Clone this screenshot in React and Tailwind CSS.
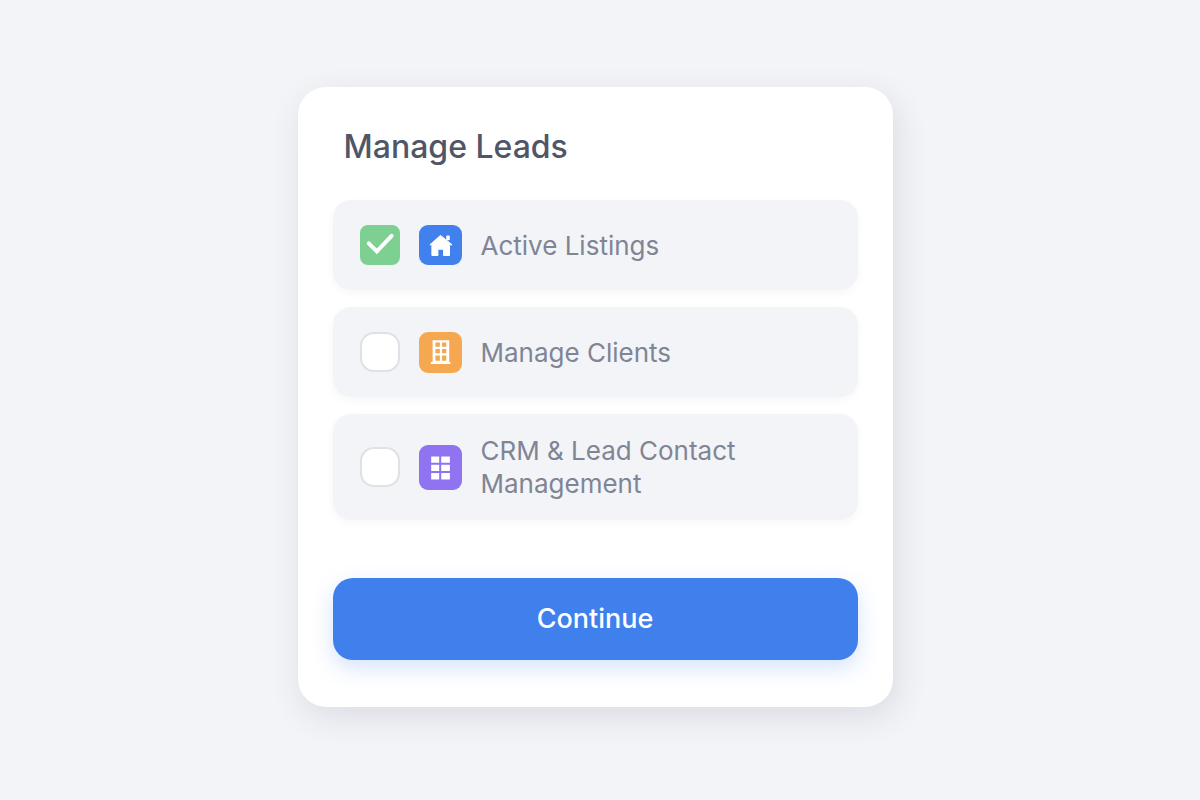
import { useState } from 'react';

const HouseIcon = () => (
  <svg width="43" height="40" viewBox="0 0 43 40" fill="#fff" aria-hidden="true">
    <rect x="27.2" y="10.6" width="3.6" height="4.6" rx="1" />
    <path
      d="M21.5 10.4 10.9 19.8h2v10.7h6v-6.3h5.6v6.3h6V19.8h2.6z"
      stroke="#fff"
      strokeWidth="1"
      strokeLinejoin="round"
    />
  </svg>
);

const BuildingIcon = () => (
  <svg width="43" height="41" viewBox="0 0 43 41" fill="#fff" aria-hidden="true">
    <path
      fillRule="evenodd"
      d="M13.6 8.2h16.6v21.8h1.2v2H11.8v-2h1.8zM16.4 10.6v4.2h4.5v-4.2zM23 10.6v4.2h4.3v-4.2zM16.4 16.9v4.3h4.5v-4.3zM23 16.9v4.3h4.3v-4.3zM16.4 23.4v5.4h4.5v-5.4zM23 23.4v5.4h4.3v-5.4z"
    />
  </svg>
);

const GridIcon = () => (
  <svg width="43" height="45" viewBox="0 0 43 45" fill="#fff" aria-hidden="true">
    <path d="M12.2 11.4h8v6.3h-8zM22.2 11.4h8.7v6.3h-8.7zM12.2 19.7h8v6.2h-8zM22.2 19.7h8.7v6.2h-8.7zM12.2 28.1h8v6.3h-8zM22.2 28.1h8.7v6.3h-8.7z" />
  </svg>
);

const options = [
  { id: 'listings', label: 'Active Listings', icon: HouseIcon, tile: 'bg-[#4181ee]' },
  { id: 'clients', label: 'Manage Clients', icon: BuildingIcon, tile: 'bg-[#f6a850]' },
  { id: 'crm', label: 'CRM & Lead Contact Management', icon: GridIcon, tile: 'bg-[#8f73f0]' },
];

const App = () => {
  const [selected, setSelected] = useState(['listings']);

  const toggle = (id) => {
    setSelected((prev) => (prev.includes(id) ? prev.filter((item) => item !== id) : [...prev, id]));
  };

  return (
    <main className="min-h-screen bg-[#f3f4f7] flex items-center justify-center pr-2.5 pb-1.5 font-['Inter',sans-serif]">
      <form
        onSubmit={(e) => e.preventDefault()}
        className="w-full max-w-[595px] bg-white rounded-[28px] px-[35px] pt-[37px] pb-[47px] shadow-[4px_10px_32px_rgba(60,60,90,0.12)]"
      >
        <h1 className="px-[11px] text-[32px] leading-[46px] font-medium text-[#505668]">Manage Leads</h1>

        {/* Options */}
        <div className="mt-[30px] flex flex-col gap-[17px]">
          {options.map((option) => {
            const Icon = option.icon;
            return (
              <label
                key={option.id}
                htmlFor={option.id}
                className="min-h-[90px] flex items-center gap-[19px] px-[27px] py-5 rounded-[18px] bg-[#f3f4f7] shadow-[0_3px_8px_rgba(60,60,90,0.04)] cursor-pointer"
              >
                <span className="grid shrink-0">
                  <input
                    id={option.id}
                    type="checkbox"
                    checked={selected.includes(option.id)}
                    onChange={() => toggle(option.id)}
                    className="peer col-start-1 row-start-1 appearance-none size-10 rounded-[14px] border-2 border-[#e0e1e6] bg-white checked:rounded-lg checked:border-[#7dcf92] checked:bg-[#7dcf92]"
                  />
                  <svg
                    className="col-start-1 row-start-1 hidden peer-checked:block pointer-events-none"
                    width="40"
                    height="40"
                    viewBox="0 0 40 40"
                    fill="none"
                    aria-hidden="true"
                  >
                    <path d="M8.8 18.4 16.8 26.4 31.6 10.8" stroke="#fff" strokeWidth="4" strokeLinecap="round" />
                  </svg>
                </span>
                <span className={`shrink-0 rounded-[9px] ${option.tile}`}>
                  <Icon />
                </span>
                <span className="max-w-[300px] text-[26px] leading-[33px] text-[#808595]">{option.label}</span>
              </label>
            );
          })}
        </div>

        <button
          type="submit"
          className="mt-[58px] w-full h-[82px] rounded-[20px] bg-[#4080ec] text-[27px] font-medium text-white shadow-[0_8px_22px_rgba(64,128,236,0.22)] cursor-pointer"
        >
          Continue
        </button>
      </form>
    </main>
  );
};

export default App;
